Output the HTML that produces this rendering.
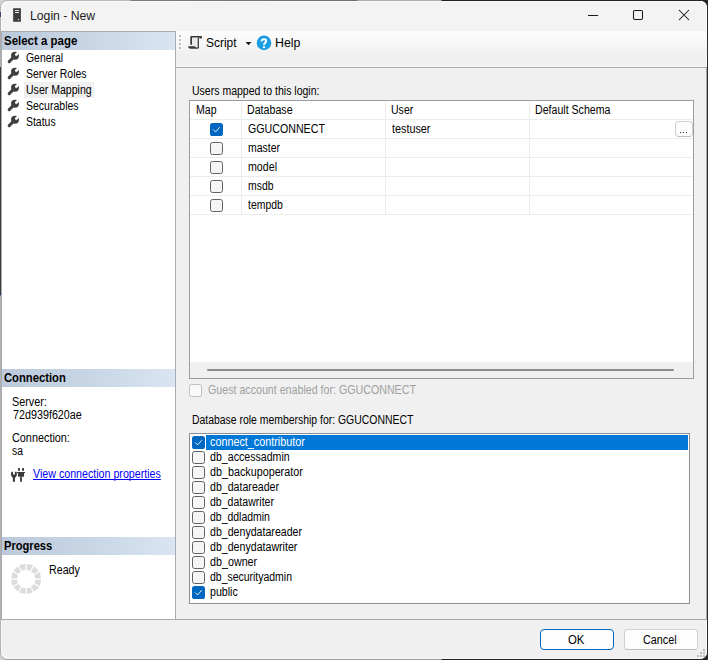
<!DOCTYPE html>
<html><head><meta charset="utf-8"><title>Login - New</title>
<style>
html,body{margin:0;padding:0;}
body{width:708px;height:660px;position:relative;overflow:hidden;background:linear-gradient(90deg,#d2d2d2 0,#d2d2d2 50%,#262626 50%,#262626 100%);font-family:"Liberation Sans",sans-serif;}
.bd{position:absolute;}
#ring{position:absolute;left:0;top:0;width:708px;height:660px;border-radius:8px;overflow:hidden;background:linear-gradient(90deg,#adadad 0,#adadad 441px,#2a2a2a 442px,#2a2a2a 100%);}
#win{position:absolute;left:1px;top:1px;width:706px;height:658px;border-radius:7px;background:#f0f0f0;overflow:hidden;box-shadow:inset 0 0 0 1px #f9f9f9;}
#win>*{position:absolute;}
.abs{position:absolute;}
.t{position:absolute;white-space:pre;line-height:1;transform-origin:0 0;color:#000;}
.hdr{position:absolute;left:2px;width:173px;height:18px;background:linear-gradient(90deg,#bdcadb 0%,#c8d5e5 50%,#d9e5f1 100%);}
.cb{position:absolute;width:11px;height:11px;border:1px solid #626262;border-radius:2.6px;background:#f5f5f5;}
.cb.on{width:13px;height:13px;border:0;background:#0067c0;border-radius:2.6px;}
.cb.on svg{display:block;}
.cb.dis{border-color:#c0c0c0;background:#f9f9f9;}
.wr{position:absolute;}
.gl{position:absolute;background:#ececec;}
.btn{position:absolute;box-sizing:border-box;border:1px solid #d0d0d0;border-bottom-color:#bdbdbd;border-radius:4px;background:#fdfdfd;}
</style></head><body>
<!-- window frame: 1px translucent border blended with desktop behind -->
<div id="ring">
<div class="bd" style="left:0;top:0;width:708px;height:1px;background:linear-gradient(90deg,#b8b8b8 0,#b8b8b8 130px,#7c7c7c 131px,#707070 357px,#b0b0b0 358px,#b0b0b0 441px,#222 442px,#222 100%)"></div>
<div class="bd" style="left:0;top:659px;width:708px;height:1px;background:linear-gradient(90deg,#9c9c9c 0,#9c9c9c 441px,#222 442px,#222 100%)"></div>
<div class="bd" style="left:0;top:8px;width:1px;height:644px;background:linear-gradient(180deg,#b4b4b4 0,#b4b4b4 4px,#4a3a70 4px,#4a3a70 9px,#b0b0b0 9px,#adadad 59px,#3a3a3a 59px,#3a3a3a 287px,#4a80c8 287px,#4a80c8 288px,#b2b2b2 288px,#b2b2b2 100%)"></div>
<div class="bd" style="left:707px;top:0;width:1px;height:660px;background:#2e2e2e"></div>
</div>
<div id="win"></div>
<!-- everything positioned in page coordinates -->
<div class="abs" style="left:1px;top:1px;width:706px;height:30px;background:#f3f3f3;border-radius:7px 7px 0 0;box-shadow:inset 1px 1px 0 #f9f9f9,inset -1px 0 0 #f9f9f9"></div>
<!-- title icon -->
<svg class="abs" style="left:13px;top:8px" width="9" height="14" viewBox="0 0 9 14"><rect x="0.15" y="0.15" width="7.75" height="13.65" rx="0.3" fill="#3c3c3c"/><rect x="2" y="2.05" width="3.95" height="0.95" fill="#f3f3f3"/><rect x="2" y="4.05" width="3.95" height="0.95" fill="#f3f3f3"/><rect x="5" y="10.95" width="1.05" height="1.05" fill="#f3f3f3"/></svg>
<!-- window controls -->
<svg class="abs" style="left:585px;top:5px" width="110" height="22" viewBox="0 0 110 22"><g fill="none" stroke="#1a1a1a" stroke-width="1.05"><path d="M3 10.5 H13.2"/><rect x="48.5" y="5.5" width="9" height="9" rx="1.3"/><path d="M94 5 L104 15 M104 5 L94 15"/></g></svg>

<!-- left panel -->
<div class="abs" style="left:1px;top:31px;width:175px;height:589px;box-sizing:border-box;border:1px solid #a9abb3;background:#fff"></div>
<div class="hdr" style="top:32px"></div>
<div class="hdr" style="top:369px"></div>
<div class="hdr" style="top:537px"></div>
<div class="abs" style="left:24px;top:82px;width:70px;height:16px;background:#f0f0f0"></div>

<!-- toolbar -->
<div class="abs" style="left:176px;top:31px;width:531px;height:25px;background:linear-gradient(180deg,#fcfcfc 0,#f9f9f9 30%,#f0f0f0 100%)"></div>
<div class="abs" style="left:176px;top:66px;width:531px;height:1px;background:#f8f8f8"></div>
<div class="abs" style="left:176px;top:67px;width:531px;height:1px;background:#a6a8b1"></div>
<div class="abs" style="left:706px;top:67px;width:1px;height:553px;background:#a6a8b1"></div>
<!-- grip -->
<div class="abs" style="left:179px;top:35px;width:2px;height:2px;background:#bcbcbc;box-shadow:0 4px 0 #bcbcbc,0 8px 0 #bcbcbc,0 12px 0 #bcbcbc,1px 1px 0 #fff,1px 5px 0 #fff,1px 9px 0 #fff,1px 13px 0 #fff"></div>
<!-- script icon -->
<svg class="abs" style="left:188px;top:35px" width="15" height="15" viewBox="0 0 15 15"><rect x="3.8" y="2.3" width="6.2" height="9.2" fill="#ebebeb"/><g fill="#3a3a3a"><path d="M2.3 9.7 V2 Q2.3 1.1 3.2 1.1 H13.9 V3.6 H11.5 V2.6 H4 V9.7 Z"/><rect x="9.7" y="2.4" width="1.25" height="10.6"/><path d="M0 11.2 H6.8 Q7.3 12.5 9.7 12.5 H10.95 Q10.95 13.8 9.5 13.8 H2.2 Q0.4 13.6 0 11.2 Z"/></g></svg>
<svg class="abs" style="left:245px;top:42px" width="7" height="4" viewBox="0 0 7 4"><path d="M0.5 0 H6.5 L3.5 3.2 Z" fill="#1a1a1a"/></svg>
<!-- help icon -->
<svg class="abs" style="left:256px;top:35px" width="16" height="16" viewBox="0 0 16 16"><circle cx="8" cy="7.9" r="7.3" fill="#1b9de2"/><path d="M5.7 6.4 C5.6 4.9 6.7 4.3 7.9 4.3 C9.2 4.3 10.2 5 10.2 6.1 C10.2 7.7 8 7.7 8 10.1" fill="none" stroke="#fff" stroke-width="2"/><rect x="6.9" y="11.2" width="2.2" height="1.9" fill="#fff"/></svg>

<!-- grid -->
<div class="abs" style="left:189px;top:100px;width:505px;height:279px;box-sizing:border-box;border:1px solid #9a9da6;background:#fff"></div>
<div class="abs" style="left:190px;top:362px;width:503px;height:16px;background:#f0f0f0"></div>
<div class="abs" style="left:207px;top:369px;width:467px;height:2px;background:#8b8b8b;border-radius:1px"></div>
<div class="gl" style="left:190px;top:119px;width:503px;height:1px"></div>
<div class="gl" style="left:190px;top:138px;width:503px;height:1px"></div>
<div class="gl" style="left:190px;top:157px;width:503px;height:1px"></div>
<div class="gl" style="left:190px;top:176px;width:503px;height:1px"></div>
<div class="gl" style="left:190px;top:195px;width:503px;height:1px"></div>
<div class="gl" style="left:190px;top:214px;width:503px;height:1px"></div>
<div class="gl" style="left:241px;top:101px;width:1px;height:114px"></div>
<div class="gl" style="left:385px;top:101px;width:1px;height:114px"></div>
<div class="gl" style="left:529px;top:101px;width:1px;height:114px"></div>
<div class="btn" style="left:675px;top:121px;width:18px;height:16px"></div>
<div class="abs" style="left:680px;top:132px;width:1px;height:1px;background:#222;box-shadow:3px 0 0 #222,6px 0 0 #222"></div>

<!-- listbox -->
<div class="abs" style="left:189px;top:433px;width:501px;height:171px;box-sizing:border-box;border:1px solid #8c8f98;background:#fff"></div>
<div class="abs" style="left:206px;top:435px;width:482px;height:15px;background:#0078d7"></div>

<!-- bottom separator + buttons -->
<div class="abs" style="left:176px;top:619px;width:531px;height:1px;background:#a6a8b1"></div>
<div class="btn" style="left:540px;top:629px;width:74px;height:21px;border-color:#0067c0"></div>
<div class="btn" style="left:624px;top:629px;width:74px;height:21px"></div>
<!-- size grip -->
<div class="abs" style="left:703px;top:649px;width:2px;height:2px;background:#bdbdbd;box-shadow:0 3px 0 #bdbdbd,-3px 3px 0 #bdbdbd,0 6px 0 #bdbdbd,-3px 6px 0 #bdbdbd,-6px 6px 0 #bdbdbd"></div>

<!-- connection icon -->
<svg class="abs" style="left:10px;top:468px" width="16" height="14" viewBox="0 0 16 14"><g fill="#3a3a3a"><path d="M1.5 3.8 L3 3.8 L3 6.6 L4.9 6.6 L4.9 3.8 L6.4 3.8 Q7.1 5 6.9 6.8 Q6.6 8.9 5 9.8 L5 13.8 L2.9 13.8 L2.9 9.8 Q1.3 8.9 1 6.8 Q0.8 5 1.5 3.8 Z"/><rect x="8" y="0.1" width="1.9" height="2.7"/><rect x="12.1" y="0.1" width="1.9" height="2.7"/><rect x="7" y="4" width="8" height="1"/><rect x="8" y="4.9" width="6" height="3.8"/><rect x="10.1" y="8.6" width="1.8" height="5.2"/></g></svg>
<!-- spinner -->
<svg class="abs" style="left:11px;top:564px" width="31" height="31" viewBox="0 0 31 31"><circle cx="15.1" cy="15" r="12.1" fill="none" stroke="#dcdcdc" stroke-width="5.7"/><path d="M-0.90 15.00 L31.10 15.00 M1.24 7.00 L28.96 23.00 M7.10 1.14 L23.10 28.86 M15.10 -1.00 L15.10 31.00 M23.10 1.14 L7.10 28.86 M28.96 7.00 L1.24 23.00" stroke="#fff" stroke-width="1.25" fill="none"/></svg>

<svg class="wr" style="left:7px;top:51px" width="13" height="13" viewBox="0 0 13 13"><circle cx="8" cy="4.8" r="4" fill="#414141"/><path d="M6.6 6.2 L2.2 10.6" stroke="#414141" stroke-width="3" stroke-linecap="round"/><path d="M9.3 3.6 L13 -0.1" stroke="#fff" stroke-width="2.7" stroke-linecap="round"/></svg>
<svg class="wr" style="left:7px;top:67px" width="13" height="13" viewBox="0 0 13 13"><circle cx="8" cy="4.8" r="4" fill="#414141"/><path d="M6.6 6.2 L2.2 10.6" stroke="#414141" stroke-width="3" stroke-linecap="round"/><path d="M9.3 3.6 L13 -0.1" stroke="#fff" stroke-width="2.7" stroke-linecap="round"/></svg>
<svg class="wr" style="left:7px;top:83px" width="13" height="13" viewBox="0 0 13 13"><circle cx="8" cy="4.8" r="4" fill="#414141"/><path d="M6.6 6.2 L2.2 10.6" stroke="#414141" stroke-width="3" stroke-linecap="round"/><path d="M9.3 3.6 L13 -0.1" stroke="#fff" stroke-width="2.7" stroke-linecap="round"/></svg>
<svg class="wr" style="left:7px;top:99px" width="13" height="13" viewBox="0 0 13 13"><circle cx="8" cy="4.8" r="4" fill="#414141"/><path d="M6.6 6.2 L2.2 10.6" stroke="#414141" stroke-width="3" stroke-linecap="round"/><path d="M9.3 3.6 L13 -0.1" stroke="#fff" stroke-width="2.7" stroke-linecap="round"/></svg>
<svg class="wr" style="left:7px;top:115px" width="13" height="13" viewBox="0 0 13 13"><circle cx="8" cy="4.8" r="4" fill="#414141"/><path d="M6.6 6.2 L2.2 10.6" stroke="#414141" stroke-width="3" stroke-linecap="round"/><path d="M9.3 3.6 L13 -0.1" stroke="#fff" stroke-width="2.7" stroke-linecap="round"/></svg>
<div class="cb on" style="left:210px;top:123px"><svg width="13" height="13" viewBox="0 0 13 13"><path d="M3.5 6.8 L5.6 8.9 L9.5 4.5" fill="none" stroke="#fff" stroke-width="0.95" stroke-linecap="round" stroke-linejoin="round" opacity="0.95"/></svg></div>
<div class="cb" style="left:210px;top:142px"></div>
<div class="cb" style="left:210px;top:161px"></div>
<div class="cb" style="left:210px;top:180px"></div>
<div class="cb" style="left:210px;top:199px"></div>
<div class="cb dis" style="left:189px;top:384px"></div>
<div class="cb on" style="left:192px;top:436px"><svg width="13" height="13" viewBox="0 0 13 13"><path d="M3.5 6.8 L5.6 8.9 L9.5 4.5" fill="none" stroke="#fff" stroke-width="0.95" stroke-linecap="round" stroke-linejoin="round" opacity="0.95"/></svg></div>
<div class="cb" style="left:192px;top:451px"></div>
<div class="cb" style="left:192px;top:466px"></div>
<div class="cb" style="left:192px;top:481px"></div>
<div class="cb" style="left:192px;top:496px"></div>
<div class="cb" style="left:192px;top:511px"></div>
<div class="cb" style="left:192px;top:526px"></div>
<div class="cb" style="left:192px;top:541px"></div>
<div class="cb" style="left:192px;top:556px"></div>
<div class="cb" style="left:192px;top:571px"></div>
<div class="cb on" style="left:192px;top:586px"><svg width="13" height="13" viewBox="0 0 13 13"><path d="M3.5 6.8 L5.6 8.9 L9.5 4.5" fill="none" stroke="#fff" stroke-width="0.95" stroke-linecap="round" stroke-linejoin="round" opacity="0.95"/></svg></div>
<span class="t" id="t0" style="left:30.00px;top:10px;font-size:12px;color:#1b1b1b;transform:scaleX(1.0181)">Login - New</span>
<span class="t" id="t1" style="left:4.00px;top:35px;font-size:12px;font-weight:700;transform:scaleX(0.9557)">Select a page</span>
<span class="t" id="t2" style="left:26.00px;top:52px;font-size:12px;transform:scaleX(0.8672)">General</span>
<span class="t" id="t3" style="left:26.00px;top:68px;font-size:12px;transform:scaleX(0.8739)">Server Roles</span>
<span class="t" id="t4" style="left:26.00px;top:84px;font-size:12px;transform:scaleX(0.8791)">User Mapping</span>
<span class="t" id="t5" style="left:26.00px;top:100px;font-size:12px;transform:scaleX(0.8759)">Securables</span>
<span class="t" id="t6" style="left:26.00px;top:116px;font-size:12px;transform:scaleX(0.8705)">Status</span>
<span class="t" id="t7" style="left:4.00px;top:372px;font-size:12px;font-weight:700;transform:scaleX(0.9373)">Connection</span>
<span class="t" id="t8" style="left:12.00px;top:396px;font-size:12px;transform:scaleX(0.9018)">Server:</span>
<span class="t" id="t9" style="left:13.00px;top:409px;font-size:12px;transform:scaleX(0.8964)">72d939f620ae</span>
<span class="t" id="t10" style="left:12.00px;top:432px;font-size:12px;transform:scaleX(0.9037)">Connection:</span>
<span class="t" id="t11" style="left:12.00px;top:445px;font-size:12px;transform:scaleX(0.8634)">sa</span>
<span class="t" id="t12" style="left:33.00px;top:468px;font-size:12px;color:#0000ff;text-decoration:underline;text-decoration-skip-ink:none;transform:scaleX(0.8886)">View connection properties</span>
<span class="t" id="t13" style="left:4.00px;top:540px;font-size:12px;font-weight:700;transform:scaleX(0.9274)">Progress</span>
<span class="t" id="t14" style="left:49.00px;top:564px;font-size:12px;transform:scaleX(0.8905)">Ready</span>
<span class="t" id="t15" style="left:206.00px;top:37px;font-size:12px;transform:scaleX(0.9964)">Script</span>
<span class="t" id="t16" style="left:275.00px;top:37px;font-size:12px;transform:scaleX(1.0288)">Help</span>
<span class="t" id="t17" style="left:192.00px;top:85px;font-size:12px;transform:scaleX(0.8766)">Users mapped to this login:</span>
<span class="t" id="t18" style="left:196.00px;top:104px;font-size:12px;transform:scaleX(0.8784)">Map</span>
<span class="t" id="t19" style="left:247.00px;top:104px;font-size:12px;transform:scaleX(0.8877)">Database</span>
<span class="t" id="t20" style="left:391.00px;top:104px;font-size:12px;transform:scaleX(0.8798)">User</span>
<span class="t" id="t21" style="left:535.00px;top:104px;font-size:12px;transform:scaleX(0.8837)">Default Schema</span>
<span class="t" id="t22" style="left:248.00px;top:123px;font-size:12px;transform:scaleX(0.8872)">GGUCONNECT</span>
<span class="t" id="t23" style="left:392.00px;top:123px;font-size:12px;transform:scaleX(0.8997)">testuser</span>
<span class="t" id="t24" style="left:248.00px;top:142px;font-size:12px;transform:scaleX(0.8735)">master</span>
<span class="t" id="t25" style="left:248.00px;top:161px;font-size:12px;transform:scaleX(0.8877)">model</span>
<span class="t" id="t26" style="left:248.00px;top:180px;font-size:12px;transform:scaleX(0.8689)">msdb</span>
<span class="t" id="t27" style="left:248.00px;top:199px;font-size:12px;transform:scaleX(0.8696)">tempdb</span>
<span class="t" id="t28" style="left:208.00px;top:384px;font-size:12px;color:#a0a0a0;transform:scaleX(0.8882)">Guest account enabled for: GGUCONNECT</span>
<span class="t" id="t29" style="left:192.00px;top:414px;font-size:12px;transform:scaleX(0.8687)">Database role membership for: GGUCONNECT</span>
<span class="t" id="t30" style="left:210.00px;top:436px;font-size:12px;color:#fff;transform:scaleX(0.8993)">connect_contributor</span>
<span class="t" id="t31" style="left:210.00px;top:451px;font-size:12px;transform:scaleX(0.8855)">db_accessadmin</span>
<span class="t" id="t32" style="left:210.00px;top:466px;font-size:12px;transform:scaleX(0.8969)">db_backupoperator</span>
<span class="t" id="t33" style="left:210.00px;top:481px;font-size:12px;transform:scaleX(0.8843)">db_datareader</span>
<span class="t" id="t34" style="left:210.00px;top:496px;font-size:12px;transform:scaleX(0.8794)">db_datawriter</span>
<span class="t" id="t35" style="left:210.00px;top:511px;font-size:12px;transform:scaleX(0.8723)">db_ddladmin</span>
<span class="t" id="t36" style="left:210.00px;top:526px;font-size:12px;transform:scaleX(0.8840)">db_denydatareader</span>
<span class="t" id="t37" style="left:210.00px;top:541px;font-size:12px;transform:scaleX(0.8848)">db_denydatawriter</span>
<span class="t" id="t38" style="left:210.00px;top:556px;font-size:12px;transform:scaleX(0.8947)">db_owner</span>
<span class="t" id="t39" style="left:210.00px;top:571px;font-size:12px;transform:scaleX(0.8716)">db_securityadmin</span>
<span class="t" id="t40" style="left:210.00px;top:586px;font-size:12px;transform:scaleX(0.8858)">public</span>
<span class="t" id="t41" style="left:568.00px;top:634px;font-size:12px;transform:scaleX(0.9481)">OK</span>
<span class="t" id="t42" style="left:643.00px;top:634px;font-size:12px;transform:scaleX(0.9002)">Cancel</span>
</body></html>
